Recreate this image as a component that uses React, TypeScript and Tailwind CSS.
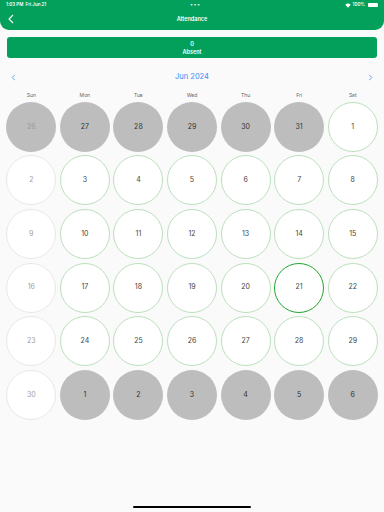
import { FC } from "react";

type Day = { n: number; kind: "out" | "sun" | "in" | "today"; sunday?: boolean };

const GREEN = "bg-[#02a05b]";

// build the june 2024 grid, with leading/trailing days from other months
const buildDays = (): Day[] => {
  const days: Day[] = [];
  [26, 27, 28, 29, 30, 31].forEach((n, i) =>
    days.push({ n, kind: "out", sunday: i === 0 }),
  );
  for (let n = 1; n <= 30; n++) {
    const col = (n + 5) % 7;
    days.push({ n, kind: n === 21 ? "today" : col === 0 ? "sun" : "in" });
  }
  [1, 2, 3, 4, 5, 6].forEach((n) => days.push({ n, kind: "out" }));
  return days;
};

const DayCell: FC<{ day: Day }> = ({ day }) => {
  let cls = "";
  if (day.kind === "out") {
    cls = `bg-[#bdbdbd] ${day.sunday ? "text-[#999]" : "text-[#333]"}`;
  } else if (day.kind === "sun") {
    cls = "bg-white border border-[#e8e8e8] text-[#a0a0a0]";
  } else if (day.kind === "today") {
    cls = "bg-white border-[1.5px] border-[#1ea52f] text-[#444]";
  } else {
    cls = "bg-white border border-[#bcdfbc] text-[#444]";
  }
  return (
    <div className="flex h-[53.6px] items-center justify-center">
      <div
        className={`flex h-[50px] w-[50px] items-center justify-center rounded-full text-[7px] ${cls}`}
      >
        {day.n}
      </div>
    </div>
  );
};

const App: FC = () => {
  const days = buildDays();
  const weekdays = ["Sun", "Mon", "Tue", "Wed", "Thu", "Fri", "Sat"];

  return (
    <div
      className="relative h-[512px] w-[384px] overflow-hidden bg-[#fafafa]"
      style={{ fontFamily: "Inter, 'Liberation Sans', sans-serif" }}
    >
      {/* header */}
      <div className={`${GREEN} h-[30px] rounded-b-[9px] text-white`}>
        <div className="flex h-[10px] items-center justify-between px-[6px] text-[4.5px] font-semibold">
          <span>1:03 PM&nbsp;&nbsp;Fri Jun 21</span>
          <span className="tracking-[1px] text-[5px]">•••</span>
          <span className="flex items-center gap-[2px]">
            <svg width="6" height="5" viewBox="0 0 12 9">
              <path d="M6 9 L0.5 3 A8 8 0 0 1 11.5 3 Z" fill="white" />
            </svg>
            100%
            <span className="ml-[1px] h-[4px] w-[10px] rounded-[1px] bg-white" />
          </span>
        </div>
        <div className="relative flex h-[18px] items-center justify-center">
          <svg
            className="absolute left-[8px]"
            width="6"
            height="10"
            viewBox="0 0 6 10"
          >
            <path
              d="M5 1 L1 5 L5 9"
              stroke="white"
              strokeWidth="1.1"
              fill="none"
            />
          </svg>
          <span className="text-[5.5px] font-semibold">Attendance</span>
        </div>
      </div>

      {/* absent card */}
      <div
        className={`${GREEN} mx-[7px] mt-[7px] flex h-[21px] flex-col items-center justify-center rounded-[3px] text-white`}
      >
        <span className="text-[5.5px] font-semibold leading-[8px]">0</span>
        <span className="text-[5.5px] font-semibold leading-[8px]">Absent</span>
      </div>

      {/* month nav */}
      <div className="mt-[13px] flex h-[12px] items-center justify-between px-[11px] text-[#3b8cf5]">
        <svg width="5" height="7" viewBox="0 0 5 8">
          <path d="M4 1 L1 4 L4 7" stroke="#3b8cf5" strokeWidth="0.9" fill="none" />
        </svg>
        <span className="text-[7.5px]">Jun 2024</span>
        <svg width="5" height="7" viewBox="0 0 5 8">
          <path d="M1 1 L4 4 L1 7" stroke="#3b8cf5" strokeWidth="0.9" fill="none" />
        </svg>
      </div>

      {/* weekdays */}
      <div className="mt-[9px] grid grid-cols-7 px-[4.5px] text-[5px] text-[#666]">
        {weekdays.map((w) => (
          <div key={w} className="flex h-[8px] items-center justify-center">
            {w}
          </div>
        ))}
      </div>

      {/* days */}
      <div className="grid grid-cols-7 px-[4.5px]">
        {days.map((d, i) => (
          <DayCell key={i} day={d} />
        ))}
      </div>

      {/* home indicator */}
      <div className="absolute bottom-[4px] left-[133px] h-[2px] w-[118px] rounded-full bg-black" />
    </div>
  );
};

export default App;
